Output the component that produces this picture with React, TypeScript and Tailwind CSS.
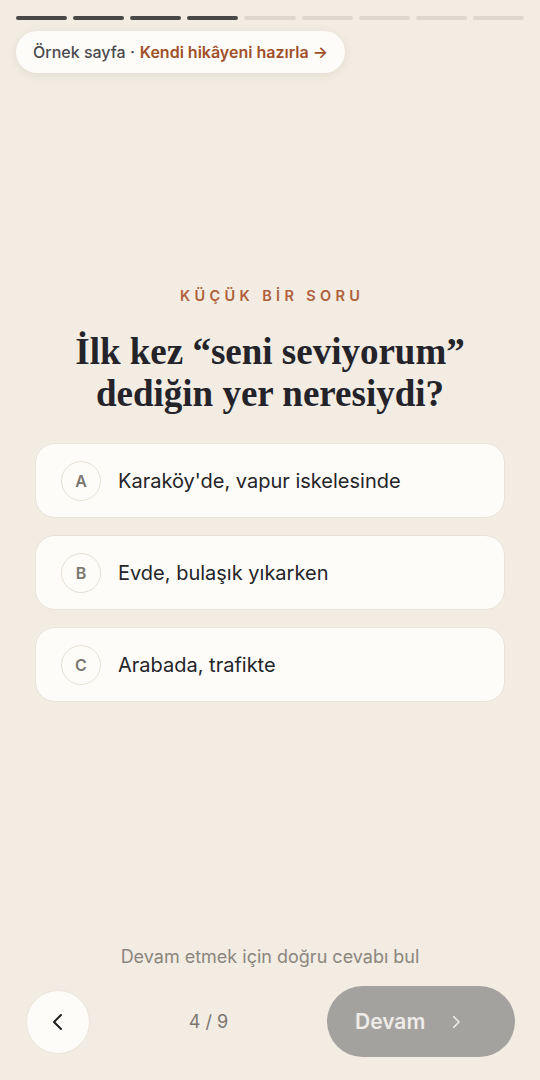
import React from "react";

const options = [
  { k: "A", t: "Karaköy'de, vapur iskelesinde" },
  { k: "B", t: "Evde, bulaşık yıkarken" },
  { k: "C", t: "Arabada, trafikte" },
];

export default function App() {
  return (
    <div
      className="w-[540px] h-[1080px] bg-[#f2ece3] flex flex-col overflow-hidden"
      style={{ fontFamily: "Inter, 'Noto Sans', sans-serif" }}
    >
      <div className="px-4 pt-4 flex gap-[6px]">
        {Array.from({ length: 9 }).map((_, i) => (
          <div
            key={i}
            className={
              i < 4
                ? "flex-1 h-[4px] rounded-full bg-[#4a4846]"
                : "flex-1 h-[4px] rounded-full bg-[#ddd7ce]"
            }
          />
        ))}
      </div>
      <div className="px-4 mt-[11px] flex">
        <div className="h-[42px] px-[17px] rounded-full bg-[#fefcf8] shadow-[0_2px_8px_rgba(120,100,70,0.12)] flex items-center text-[16px]">
          <span className="text-[#4b4a4f] font-medium">Örnek sayfa ·</span>
          <span className="text-[#a0502b] font-semibold ml-[5px]">Kendi hikâyeni hazırla →</span>
        </div>
      </div>

      <div className="mt-[213px] text-center text-[14.5px] leading-[20px] font-semibold tracking-[0.3em] pl-[0.3em] text-[#b0603a]">
        KÜÇÜK BİR SORU
      </div>
      <h1
        className="mt-[25px] text-center text-[37px] leading-[42px] font-bold text-[#24232a]"
        style={{ fontFamily: "'Liberation Serif', 'DejaVu Serif', serif" }}
      >
        İlk kez “seni seviyorum”
        <br />
        dediğin yer neresiydi?
      </h1>

      <div className="mt-[28px] px-[35px] flex flex-col gap-[17px]">
        {options.map((o) => (
          <div
            key={o.k}
            className="h-[75px] rounded-[20px] bg-[#fefcf8] border border-[#e9e3d9] flex items-center px-[25px] gap-[17px]"
          >
            <div className="w-[40px] h-[40px] rounded-full border border-[#e5dfd5] flex items-center justify-center text-[16px] font-semibold text-[#7b7770]">
              {o.k}
            </div>
            <div className="text-[20px] text-[#242429]">{o.t}</div>
          </div>
        ))}
      </div>

      <div className="flex-1" />

      <div className="text-center text-[18px] leading-[24px] text-[#8b867d]">
        Devam etmek için doğru cevabı bul
      </div>
      <div className="mt-[17px] mb-[23px] pl-[26px] pr-[25px] flex items-center">
        <div className="w-[64px] h-[64px] rounded-full bg-[#fefcf8] border border-[#ece6dc] flex items-center justify-center">
          <svg width="24" height="24" viewBox="0 0 24 24" fill="none" stroke="#1f1f22" strokeWidth="2" strokeLinecap="round" strokeLinejoin="round">
            <path d="M15 5l-7 7 7 7" />
          </svg>
        </div>
        <div className="flex-1 text-center text-[18px] text-[#7a766f]">4 / 9</div>
        <div className="w-[188px] h-[71px] rounded-full bg-[#a4a29f] flex items-center pl-[28px] gap-[22px]">
          <span className="text-[21px] font-semibold text-[#eeece8]">Devam</span>
          <svg width="18" height="18" viewBox="0 0 24 24" fill="none" stroke="#eeece8" strokeWidth="2.2" strokeLinecap="round" strokeLinejoin="round">
            <path d="M9 5l7 7-7 7" />
          </svg>
        </div>
      </div>
    </div>
  );
}
